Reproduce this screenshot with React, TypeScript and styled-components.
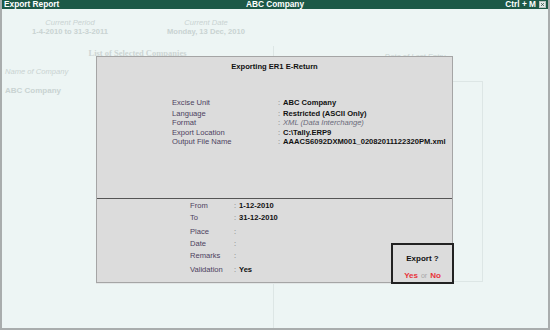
import React from 'react'
import styled, { createGlobalStyle } from 'styled-components'

const GlobalStyle = createGlobalStyle`
  body {
    margin: 0;
    background: #ffffff;
    font-family: "Liberation Sans", Arial, sans-serif;
  }
`

const faded = '#c9d3d2'
const faintLine = '#dde6e5'

type Field = { label: string; value: string; italic?: boolean }

const unitFields: Field[] = [
  { label: 'Language', value: 'Restricted (ASCII Only)' },
  { label: 'Format', value: 'XML (Data Interchange)', italic: true },
  { label: 'Export Location', value: 'C:\\Tally.ERP9' },
  { label: 'Output File Name', value: 'AAACS6092DXM001_02082011122320PM.xml' },
]

const periodFields: { label: string; value: string; spaced?: boolean }[] = [
  { label: 'From', value: '1-12-2010' },
  { label: 'To', value: '31-12-2010' },
  { label: 'Place', value: '', spaced: true },
  { label: 'Date', value: '' },
  { label: 'Remarks', value: '' },
  { label: 'Validation', value: 'Yes', spaced: true },
]

export default function App() {
  return (
    <>
      <GlobalStyle />
      <Window>
        <TitleBar>
          <TitleLeft>Export Report</TitleLeft>
          <TitleCenter>ABC Company</TitleCenter>
          <TitleRight>
            Ctrl + M
            <CloseBox>
              <svg width="7" height="7" viewBox="0 0 7 7">
                <path d="M1.5 1.5 L5.5 5.5 M5.5 1.5 L1.5 5.5" stroke="#2f4f47" strokeWidth="1.1" />
              </svg>
            </CloseBox>
          </TitleRight>
        </TitleBar>

        <Body>
          <PeriodRow>
            <PeriodCell>
              <FadedCaption>Current Period</FadedCaption>
              <FadedValue>1-4-2010 to 31-3-2011</FadedValue>
            </PeriodCell>
            <PeriodCell>
              <FadedCaption>Current Date</FadedCaption>
              <FadedValue>Monday, 13 Dec, 2010</FadedValue>
            </PeriodCell>
          </PeriodRow>

          <LeftColumn>
            <ListHeading>List of Selected Companies</ListHeading>
            <FadedCaption $align="left">Name of Company</FadedCaption>
            <CompanyName>ABC Company</CompanyName>
          </LeftColumn>

          <RightColumn>
            <FadedCaption>Date of Last Entry</FadedCaption>
            <EntryBox />
          </RightColumn>

          <Dialog>
            <DialogTop>
              <DialogTitle>Exporting ER1 E-Return</DialogTitle>
              <UnitGrid>
                <InfoRow $first>
                  <Label>Excise Unit</Label>
                  <Colon>:</Colon>
                  <Value>ABC Company</Value>
                </InfoRow>
                {unitFields.map((f) => (
                  <InfoRow key={f.label}>
                    <Label>{f.label}</Label>
                    <Colon>:</Colon>
                    <Value $italic={f.italic}>{f.value}</Value>
                  </InfoRow>
                ))}
              </UnitGrid>
            </DialogTop>
            <DialogBottom>
              {periodFields.map((f) => (
                <PeriodFieldRow key={f.label} $spaced={f.spaced}>
                  <Label>{f.label}</Label>
                  <Colon>:</Colon>
                  <Value>{f.value}</Value>
                </PeriodFieldRow>
              ))}
            </DialogBottom>
            <ConfirmBox>
              <ConfirmQuestion>Export ?</ConfirmQuestion>
              <ConfirmAnswers>
                <Answer>Yes</Answer>
                <Or>or</Or>
                <Answer>No</Answer>
              </ConfirmAnswers>
            </ConfirmBox>
          </Dialog>
        </Body>
      </Window>
    </>
  )
}

const Window = styled.div`
  width: 550px;
  height: 330px;
  box-sizing: border-box;
  display: flex;
  flex-direction: column;
  background: #edf5f4;
  border-left: 2px solid #a9adad;
  border-right: 2px solid #a9adad;
  border-bottom: 2px solid #a9adad;
  overflow: hidden;
`

const TitleBar = styled.div`
  height: 9px;
  margin: 0 -2px;
  background: #1d5947;
  color: #ffffff;
  font-size: 8.3px;
  font-weight: bold;
  line-height: 9px;
  display: grid;
  grid-template-columns: 1fr auto 1fr;
  align-items: center;
  padding: 0 4px 0 4px;
`

const TitleLeft = styled.span``

const TitleCenter = styled.span`
  text-align: center;
`

const TitleRight = styled.span`
  display: flex;
  justify-content: flex-end;
  align-items: center;
  gap: 3px;
`

const CloseBox = styled.span`
  width: 7px;
  height: 7px;
  background: #e4ebe9;
  border: 1px solid #b8c2bf;
  box-sizing: border-box;
  display: flex;
  align-items: center;
  justify-content: center;
  overflow: hidden;
`

const Body = styled.div`
  flex: 1;
  position: relative;
  display: grid;
  grid-template-columns: 272px 1fr;
  grid-template-rows: auto 1fr;
`

const PeriodRow = styled.div`
  grid-column: 1 / 3;
  display: grid;
  grid-template-columns: 136px 136px;
  padding-top: 9px;
  height: 28px;
`

const PeriodCell = styled.div`
  display: flex;
  flex-direction: column;
  align-items: center;
`

const FadedCaption = styled.div<{ $align?: 'left' | 'center' }>`
  color: ${faded};
  font-size: 7.6px;
  font-style: italic;
  line-height: 9px;
  text-align: ${(p) => p.$align || 'center'};
`

const FadedValue = styled.div`
  color: ${faded};
  font-size: 7.6px;
  font-weight: bold;
  line-height: 9px;
`

const LeftColumn = styled.div`
  border-right: 1px solid ${faintLine};
  padding: 1px 3px 0 3px;
  display: flex;
  flex-direction: column;
  gap: 8px;
`

const ListHeading = styled.div`
  font-family: "Liberation Serif", "Times New Roman", serif;
  font-weight: bold;
  font-size: 8.5px;
  line-height: 12px;
  color: #cdd5d4;
  text-align: center;
`

const CompanyName = styled.div`
  color: ${faded};
  font-size: 8px;
  font-weight: bold;
  line-height: 10px;
  margin-top: 2px;
`

const RightColumn = styled.div`
  padding-top: 6px;
  display: flex;
  flex-direction: column;
  align-items: flex-start;
  padding-left: 68px;

  & > ${FadedCaption} {
    align-self: stretch;
    margin-left: -20px;
    margin-right: 40px;
  }
`

const EntryBox = styled.div`
  margin-top: 20px;
  width: 141px;
  height: 201px;
  box-sizing: border-box;
  border: 1px solid ${faintLine};
`

const Dialog = styled.div`
  position: absolute;
  left: 94px;
  top: 47px;
  width: 357px;
  height: 227px;
  box-sizing: border-box;
  background: #dcdcdc;
  border: 1px solid #a5a5a5;
  box-shadow: 0 1px 0 #e2e6e6;
  display: flex;
  flex-direction: column;
  font-size: 7.6px;
`

const DialogTop = styled.div`
  height: 142px;
  border-bottom: 1px solid #555555;
  padding-top: 5px;
  box-sizing: border-box;
`

const DialogTitle = styled.div`
  font-weight: bold;
  text-align: center;
  line-height: 10px;
  color: #111111;
`

const UnitGrid = styled.div`
  margin-top: 26px;
  padding-left: 75px;
`

const InfoRow = styled.div<{ $first?: boolean }>`
  display: grid;
  grid-template-columns: 106px 5px 1fr;
  height: ${(p) => (p.$first ? '10.5px' : '9.5px')};
  line-height: 9.5px;
`

const Label = styled.span`
  color: #4c4260;
`

const Colon = styled.span`
  color: #777777;
`

const Value = styled.span<{ $italic?: boolean }>`
  font-weight: ${(p) => (p.$italic ? 'normal' : 'bold')};
  font-style: ${(p) => (p.$italic ? 'italic' : 'normal')};
  color: ${(p) => (p.$italic ? '#6a6a7a' : '#111111')};
`

const DialogBottom = styled.div`
  flex: 1;
  padding: 1px 0 0 93px;
`

const PeriodFieldRow = styled.div<{ $spaced?: boolean }>`
  display: grid;
  grid-template-columns: 44px 5px 1fr;
  height: 12px;
  line-height: 12px;
  margin-top: ${(p) => (p.$spaced ? '2px' : '0')};
`

const ConfirmBox = styled.div`
  position: absolute;
  left: 294px;
  top: 186px;
  width: 63px;
  height: 41px;
  box-sizing: border-box;
  border: 2px solid #222222;
  background: #dcdcdc;
  display: flex;
  flex-direction: column;
  align-items: center;
  padding-top: 9px;
  gap: 7px;
`

const ConfirmQuestion = styled.div`
  font-weight: bold;
  font-size: 8px;
  line-height: 10px;
  color: #111111;
`

const ConfirmAnswers = styled.div`
  display: flex;
  gap: 3px;
  align-items: baseline;
  line-height: 10px;
`

const Answer = styled.span`
  color: #e8343a;
  font-weight: bold;
  font-size: 8px;
`

const Or = styled.span`
  color: #a8a8a8;
  font-size: 7px;
`
